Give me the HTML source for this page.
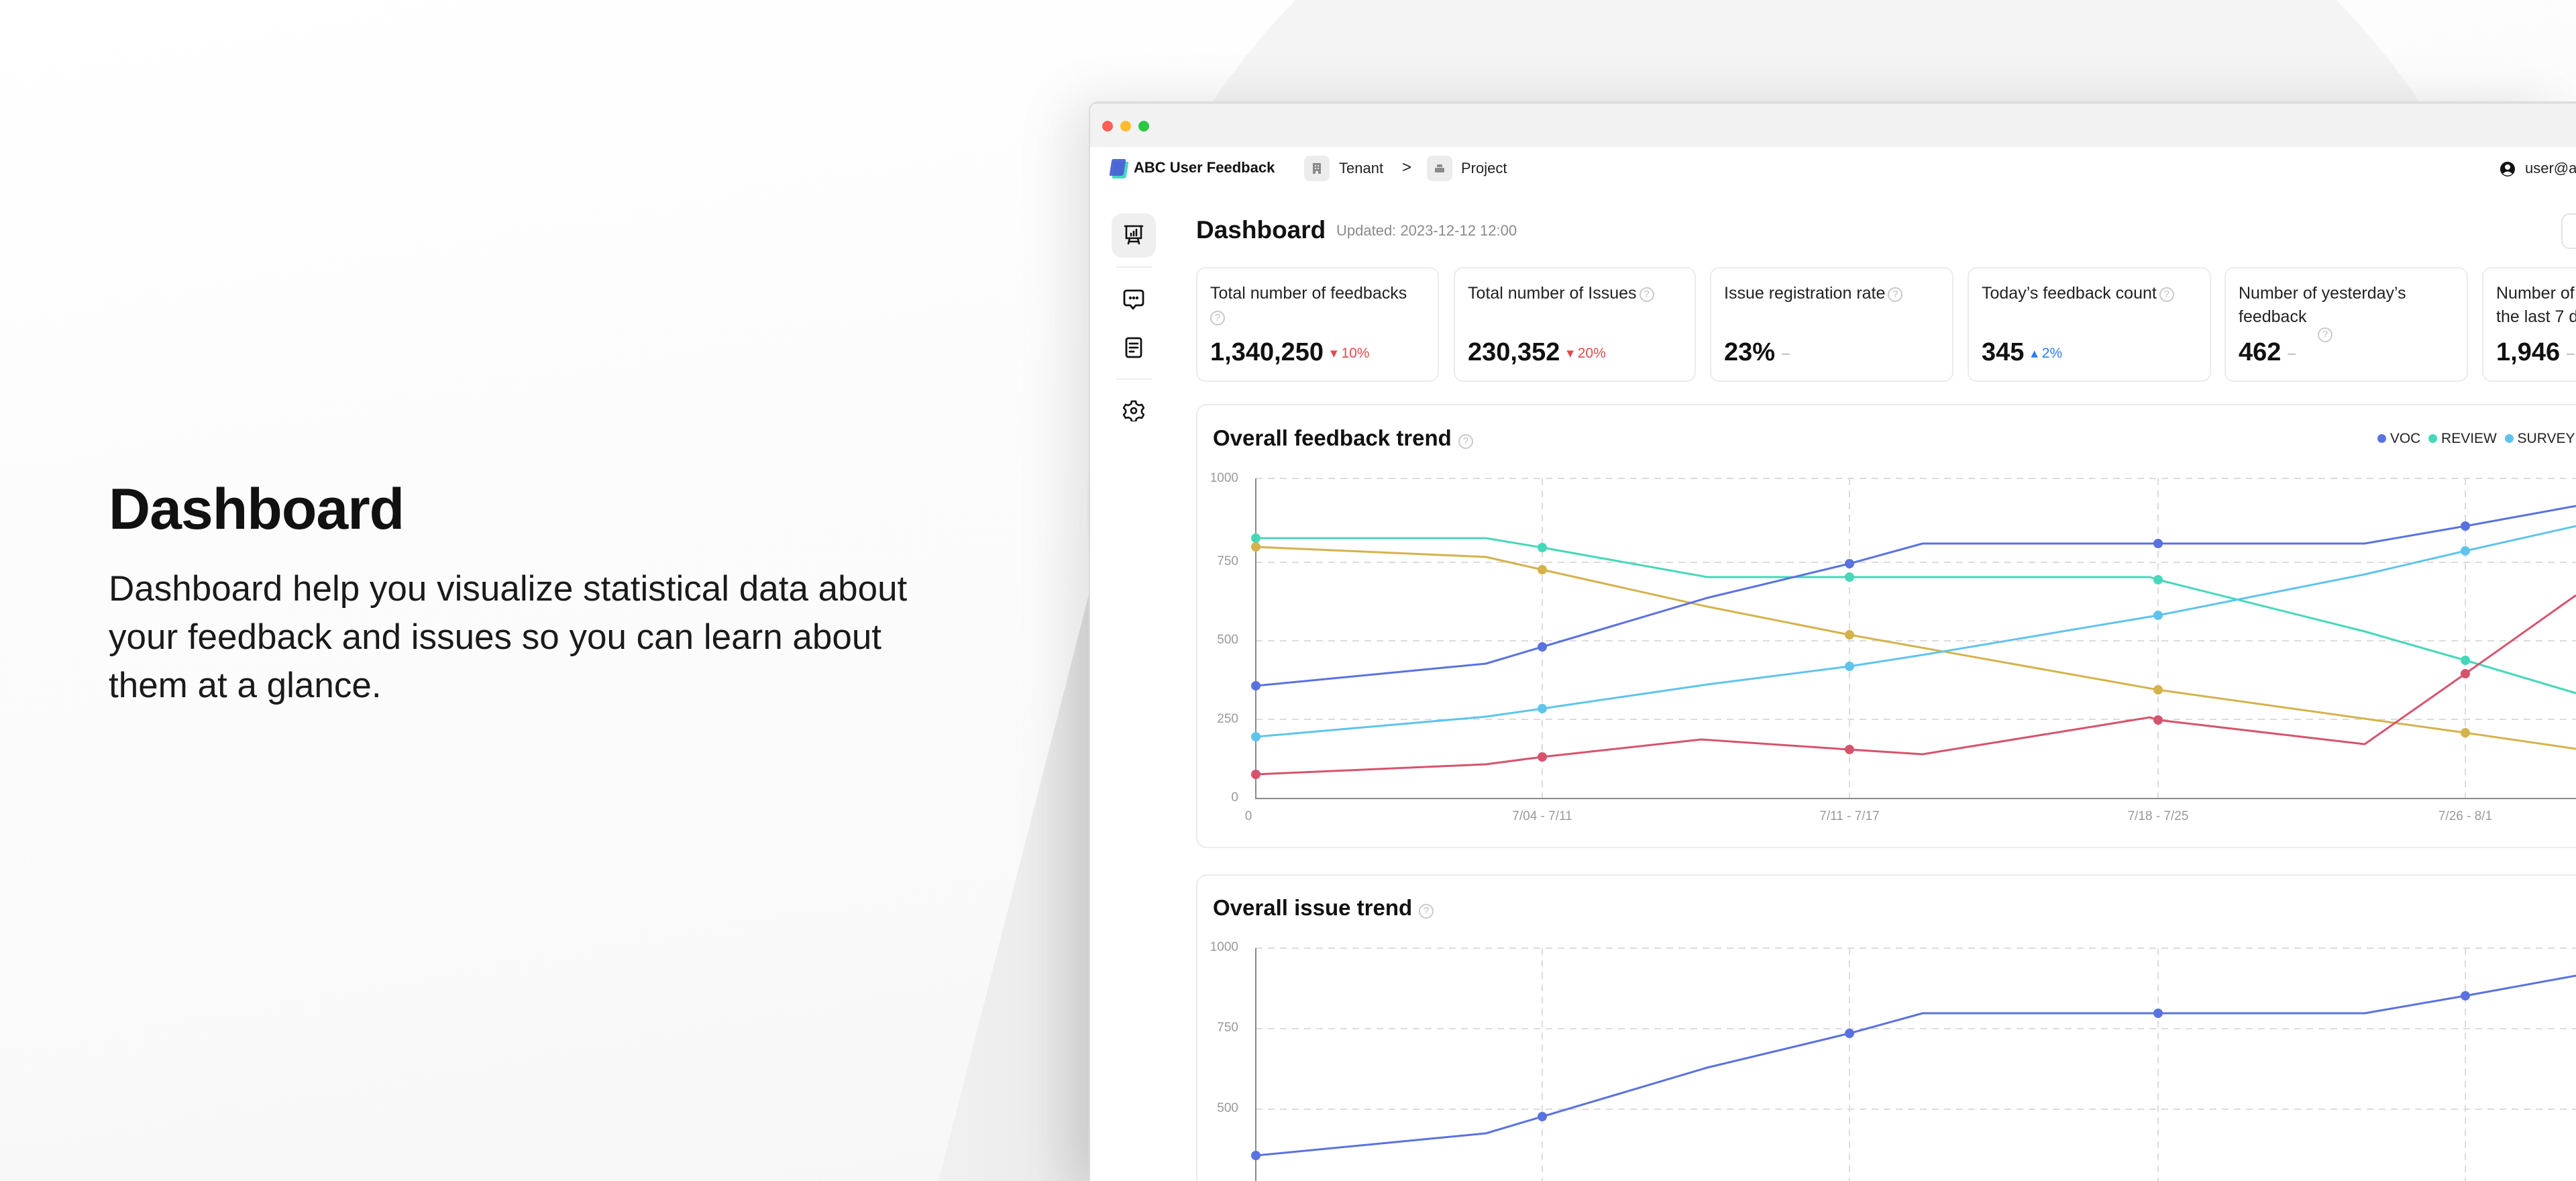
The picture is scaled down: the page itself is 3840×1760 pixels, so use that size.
<!DOCTYPE html>
<html><head><meta charset="utf-8">
<style>
*{margin:0;padding:0;box-sizing:border-box}
html,body{width:3840px;height:1760px;overflow:hidden}
body{position:relative;font-family:"Liberation Sans",sans-serif;background:linear-gradient(170deg,#ffffff 0%,#fbfbfb 50%,#f5f5f5 100%);color:#111}
.abs{position:absolute}
.win{position:absolute;left:1623px;top:151px;width:2217px;height:1609px;background:#fff;border:2px solid #dcdcdc;border-right:none;border-bottom:none;border-radius:14px 0 0 0;box-shadow:-30px 0 80px rgba(0,0,0,0.10);overflow:hidden}
.tb{position:absolute;left:0;top:0;right:0;height:66px;background:#f2f2f2;border-top:2px solid #e2e2e2}
.dot{position:absolute;top:25px;width:16px;height:16px;border-radius:50%}
.card{position:absolute;top:398px;height:171px;background:#fff;border:2px solid #ececec;border-radius:14px;overflow:hidden}
.lab{position:absolute;left:19px;top:20px;font-size:25px;line-height:35px;color:#222;white-space:nowrap}
.val{position:absolute;left:19px;top:104px;font-size:38px;font-weight:bold;color:#111;white-space:nowrap}
.dl{font-size:21px;font-weight:normal;margin-left:10px;vertical-align:4px}
.q{display:inline-block;width:22px;height:22px;border:2px solid #c9c9c9;border-radius:50%;color:#bbb;font-size:15px;line-height:18px;text-align:center;vertical-align:2px;margin-left:4px;font-weight:normal}
.yl{position:absolute;font-size:19px;color:#999;text-align:right;width:60px}
.xl{position:absolute;font-size:19px;color:#999;top:1206px;width:200px;text-align:center}
</style></head><body>
<svg class="abs" style="left:0;top:0" width="3840" height="1760">
<defs>
<linearGradient id="dg" x1="0" x2="1" y1="0" y2="0"><stop offset="0" stop-color="#f1f1f1"/><stop offset="0.6" stop-color="#ececec"/><stop offset="1" stop-color="#dedede"/></linearGradient>
</defs>
<circle cx="2707" cy="760" r="1086" fill="#f4f4f4"/>
<polygon points="1399,1760 1640,820 1640,1760" fill="url(#dg)"/>
</svg>

<div class="abs" style="left:162px;top:710px;font-size:86px;font-weight:bold;color:#111;letter-spacing:-1px">Dashboard</div>
<div class="abs" style="left:162px;top:842px;font-size:53px;line-height:72px;color:#1a1a1a;width:1400px;white-space:nowrap">Dashboard help you visualize statistical data about<br>your feedback and issues so you can learn about<br>them at a glance.</div>

<div class="win">
 <div class="tb">
  <div class="dot" style="left:18px;background:#fe5f57"></div>
  <div class="dot" style="left:45px;background:#febc2e"></div>
  <div class="dot" style="left:72px;background:#28c840"></div>
 </div>
</div>

<!-- header -->
<svg class="abs" style="left:1652px;top:236px" width="32" height="32" viewBox="0 0 32 32">
<path d="M8 8 Q8 5 11 5 L28 5 Q31 5 30 8 L27 27 Q26 30 23 30 L8 30 Q5 30 6 27Z" fill="#45d9c0"/>
<path d="M5 4 Q5 1 8 1 L24 1 Q27 1 26 4 L23 23 Q22 26 19 26 L4 26 Q1 26 2 23Z" fill="#4a62d6" opacity="0.95"/>
</svg>
<div class="abs" style="left:1690px;top:237px;font-size:22px;font-weight:bold;color:#111">ABC User Feedback</div>
<div class="abs" style="left:1944px;top:232px;width:38px;height:38px;background:#ececec;border-radius:8px"></div>
<svg class="abs" style="left:1953px;top:241px" width="20" height="20" viewBox="0 0 20 20"><path d="M4 2h12v16h-4v-4h-4v4H4z" fill="#8a8a8a"/><rect x="7" y="5" width="2" height="2" fill="#ececec"/><rect x="11" y="5" width="2" height="2" fill="#ececec"/><rect x="7" y="9" width="2" height="2" fill="#ececec"/><rect x="11" y="9" width="2" height="2" fill="#ececec"/></svg>
<div class="abs" style="left:1996px;top:238px;font-size:22px;color:#222">Tenant</div>
<div class="abs" style="left:2090px;top:236px;font-size:24px;color:#222">&gt;</div>
<div class="abs" style="left:2127px;top:232px;width:38px;height:38px;background:#ececec;border-radius:8px"></div>
<svg class="abs" style="left:2136px;top:241px" width="20" height="20" viewBox="0 0 20 20"><rect x="6" y="4" width="8" height="4" rx="1" fill="#8a8a8a"/><rect x="3" y="9" width="14" height="7" rx="1.5" fill="#8a8a8a"/></svg>
<div class="abs" style="left:2178px;top:238px;font-size:22px;color:#222">Project</div>
<svg class="abs" style="left:3726px;top:239px" width="24" height="26" viewBox="0 0 24 26"><circle cx="12" cy="13" r="11" fill="#111"/><circle cx="12" cy="10" r="4" fill="#fff"/><path d="M5 20 Q12 13 19 20 Q12 25 5 20Z" fill="#fff"/></svg>
<div class="abs" style="left:3764px;top:238px;font-size:22px;color:#222">user@abc.com</div>

<!-- sidebar -->
<div class="abs" style="left:1657px;top:318px;width:66px;height:66px;background:#efefef;border-radius:16px"></div>
<svg class="abs" style="left:1674px;top:334px" width="32" height="34" viewBox="0 0 32 34" fill="none" stroke="#111" stroke-width="2.6" stroke-linecap="round"><path d="M3 3h26"/><path d="M5 3v18h22V3"/><path d="M12 17v-3M16 17v-6M20 17V8"/><path d="M10 21l-2 8M22 21l2 8M9 26h14"/></svg>
<div class="abs" style="left:1664px;top:397px;width:53px;height:2px;background:#ececec"></div>
<svg class="abs" style="left:1674px;top:430px" width="32" height="34" viewBox="0 0 32 34" fill="none" stroke="#111" stroke-width="2.8" stroke-linejoin="round"><path d="M6 3h20q4 0 4 4v14q0 4-4 4h-7l-4 5-4-5H6q-4 0-4-4V7q0-4 4-4z"/><circle cx="11" cy="14" r="0.8" fill="#111"/><circle cx="16" cy="14" r="0.8" fill="#111"/><circle cx="21" cy="14" r="0.8" fill="#111"/></svg>
<svg class="abs" style="left:1676px;top:502px" width="28" height="32" viewBox="0 0 28 32" fill="none" stroke="#111" stroke-width="2.8" stroke-linecap="round"><rect x="3" y="2" width="22" height="28" rx="3"/><path d="M8 10h12M8 16h12M8 22h6"/></svg>
<div class="abs" style="left:1664px;top:564px;width:53px;height:2px;background:#ececec"></div>
<svg class="abs" style="left:1674px;top:596px" width="32" height="32" viewBox="0 0 32 32" fill="none" stroke="#111" stroke-width="2.6" stroke-linejoin="round"><path d="M13 2h6l1 4 4 2 4-1 3 5-3 3v4l3 3-3 5-4-1-4 2-1 4h-6l-1-4-4-2-4 1-3-5 3-3v-4L1 12l3-5 4 1 4-2z"/><circle cx="16" cy="16" r="4"/></svg>

<!-- title -->
<div class="abs" style="left:1783px;top:322px;font-size:37px;font-weight:bold;color:#111">Dashboard</div>
<div class="abs" style="left:1992px;top:331px;font-size:22px;color:#8a8a8a">Updated: 2023-12-12 12:00</div>
<div class="abs" style="left:3818px;top:318px;width:60px;height:53px;border:2px solid #e3e3e3;border-radius:12px"></div>

<!-- cards -->
<div class="card" style="left:1783px;width:362px"><div class="lab">Total number of feedbacks<br><span class="q" style="margin-left:0">?</span></div><div class="val">1,340,250<span class="dl" style="color:#e5484d">&#9662; 10%</span></div></div>
<div class="card" style="left:2167px;width:361px"><div class="lab">Total number of Issues<span class="q">?</span></div><div class="val">230,352<span class="dl" style="color:#e5484d">&#9662; 20%</span></div></div>
<div class="card" style="left:2549px;width:363px"><div class="lab">Issue registration rate<span class="q">?</span></div><div class="val">23%<span class="dl" style="color:#aaa">&#8211;</span></div></div>
<div class="card" style="left:2933px;width:363px"><div class="lab">Today’s feedback count<span class="q">?</span></div><div class="val">345<span class="dl" style="color:#2b7cf6">&#9652; 2%</span></div></div>
<div class="card" style="left:3316px;width:363px"><div class="lab">Number of yesterday’s<br>feedback</div><span class="q abs" style="left:133px;top:88px">?</span><div class="val">462<span class="dl" style="color:#aaa">&#8211;</span></div></div>
<div class="card" style="left:3700px;width:363px"><div class="lab">Number of feedback in<br>the last 7 days</div><div class="val">1,946<span class="dl" style="color:#aaa">&#8211;</span></div></div>

<!-- chart cards -->
<div class="abs" style="left:1783px;top:602px;width:2200px;height:662px;border:2px solid #ececec;border-radius:16px;background:#fff"></div>
<div class="abs" style="left:1783px;top:1303px;width:2057px;height:457px;border:2px solid #ececec;border-right:none;border-bottom:none;border-radius:16px 0 0 0;background:#fff"></div>
<div class="abs" style="left:1808px;top:634px;font-size:33px;font-weight:bold;color:#111">Overall feedback trend<span class="q" style="margin-left:10px">?</span></div>
<div class="abs" style="left:1808px;top:1334px;font-size:33px;font-weight:bold;color:#111">Overall issue trend<span class="q" style="margin-left:10px">?</span></div>
<div class="abs" style="left:3544px;top:642px;font-size:21px;color:#222;white-space:nowrap">
<span style="display:inline-block;width:13px;height:13px;border-radius:50%;background:#5a72e0"></span> VOC
<span style="display:inline-block;width:13px;height:13px;border-radius:50%;background:#45d8b8;margin-left:6px"></span> REVIEW
<span style="display:inline-block;width:13px;height:13px;border-radius:50%;background:#5ec4ec;margin-left:6px"></span> SURVEY</div>

<div class="yl" style="left:1786px;top:702px">1000</div>
<div class="yl" style="left:1786px;top:826px">750</div>
<div class="yl" style="left:1786px;top:943px">500</div>
<div class="yl" style="left:1786px;top:1061px">250</div>
<div class="yl" style="left:1786px;top:1178px">0</div>
<div class="xl" style="left:1761px">0</div>
<div class="xl" style="left:2199px">7/04 - 7/11</div>
<div class="xl" style="left:2657px">7/11 - 7/17</div>
<div class="xl" style="left:3117px">7/18 - 7/25</div>
<div class="xl" style="left:3575px">7/26 - 8/1</div>
<div class="yl" style="left:1786px;top:1401px">1000</div>
<div class="yl" style="left:1786px;top:1521px">750</div>
<div class="yl" style="left:1786px;top:1641px">500</div>

<svg class="abs" style="left:0;top:0" width="3840" height="1760">
<g stroke="#dcdcdc" stroke-width="2" stroke-dasharray="10,8" fill="none">
<path d="M1872 713H3840M1872 838H3840M1872 955H3840M1872 1072H3840"/>
<path d="M2299 713V1190M2757 713V1190M3217 713V1190M3675 713V1190"/>
<path d="M1872 1413H3840M1872 1533H3840M1872 1653H3840"/>
<path d="M2299 1413V1760M2757 1413V1760M3217 1413V1760M3675 1413V1760"/>
</g>
<path d="M1872 713V1190H3840" stroke="#8a8a8a" stroke-width="2" fill="none"/>
<path d="M1872 1413V1760" stroke="#8a8a8a" stroke-width="2" fill="none"/>
<g fill="none" stroke-width="3" stroke-linejoin="round">
<polyline stroke="#45d8b8" points="1872,802 2215,802 2299,816 2545,860 2757,860 3205,860 3217,864 3525,941 3675,984 3840,1033"/>
<polyline stroke="#d4b24c" points="1872,815 2215,830 2299,849 2545,904 2757,946 3217,1028 3675,1092 3840,1116"/>
<polyline stroke="#5a72e0" points="1872,1022 2215,989 2299,964 2545,891 2757,840 2866,810 3217,810 3525,810 3675,784 3840,754"/>
<polyline stroke="#5ec4ec" points="1872,1098 2215,1068 2299,1056 2545,1020 2757,993 2866,976 3217,917 3525,856 3675,821 3840,784"/>
<polyline stroke="#d6536d" points="1872,1154 2215,1139 2299,1128 2536,1102 2757,1117 2866,1124 3205,1069 3217,1073 3525,1109 3675,1004 3840,887"/>
<polyline stroke="#5a72e0" points="1872,1722 2215,1689 2299,1664 2545,1591 2757,1540 2866,1510 3217,1510 3525,1510 3675,1484 3840,1454"/>
</g>
<g fill="#45d8b8"><circle cx="1872" cy="802" r="7"/><circle cx="2299" cy="816" r="7"/><circle cx="2757" cy="860" r="7"/><circle cx="3217" cy="864" r="7"/><circle cx="3675" cy="984" r="7"/></g>
<g fill="#d4b24c"><circle cx="1872" cy="815" r="7"/><circle cx="2299" cy="849" r="7"/><circle cx="2757" cy="946" r="7"/><circle cx="3217" cy="1028" r="7"/><circle cx="3675" cy="1092" r="7"/></g>
<g fill="#5a72e0"><circle cx="1872" cy="1022" r="7"/><circle cx="2299" cy="964" r="7"/><circle cx="2757" cy="840" r="7"/><circle cx="3217" cy="810" r="7"/><circle cx="3675" cy="784" r="7"/>
<circle cx="1872" cy="1722" r="7"/><circle cx="2299" cy="1664" r="7"/><circle cx="2757" cy="1540" r="7"/><circle cx="3217" cy="1510" r="7"/><circle cx="3675" cy="1484" r="7"/></g>
<g fill="#5ec4ec"><circle cx="1872" cy="1098" r="7"/><circle cx="2299" cy="1056" r="7"/><circle cx="2757" cy="993" r="7"/><circle cx="3217" cy="917" r="7"/><circle cx="3675" cy="821" r="7"/></g>
<g fill="#d6536d"><circle cx="1872" cy="1154" r="7"/><circle cx="2299" cy="1128" r="7"/><circle cx="2757" cy="1117" r="7"/><circle cx="3217" cy="1073" r="7"/><circle cx="3675" cy="1004" r="7"/></g>
</svg>
</body></html>
